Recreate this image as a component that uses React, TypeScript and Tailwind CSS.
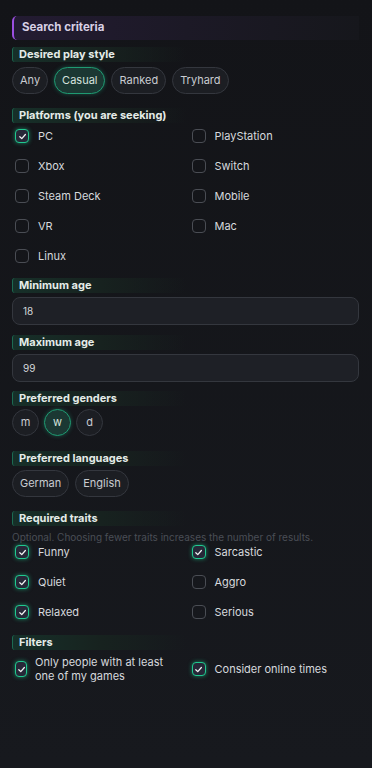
const font = { fontFamily: 'Inter, "Noto Sans", sans-serif' };

function Label({ children }: { children: React.ReactNode }) {
  return (
    <div className="flex h-[15px] w-[175px] items-center rounded-l-[3px] border-l border-[#1c6b52] bg-gradient-to-r from-[#163029] via-[#17221f] to-transparent pl-[6px] text-[11px] font-bold leading-none text-[#e4ece8]">
      {children}
    </div>
  );
}

function Pill({ text, active }: { text: string; active?: boolean }) {
  return (
    <div
      className={`flex h-[27px] items-center rounded-full border px-[7px] text-[11px] ${
        active
          ? 'border-[#1f9a72] bg-[#1b3833] text-[#d6e2de] shadow-[0_0_4px_rgba(31,190,140,0.35)]'
          : 'border-[#34373e] bg-[#1c1e23] text-[#c9ccd1]'
      }`}
    >
      {text}
    </div>
  );
}

function Circle({ text, active }: { text: string; active?: boolean }) {
  return (
    <div
      className={`flex h-[27px] w-[27px] items-center justify-center rounded-full border text-[11px] ${
        active
          ? 'border-[#1f9a72] bg-[#1b3833] text-[#d6e2de] shadow-[0_0_4px_rgba(31,190,140,0.35)]'
          : 'border-[#34373e] bg-[#1c1e23] text-[#c9ccd1]'
      }`}
    >
      {text}
    </div>
  );
}

function Check({ label, checked, narrow }: { label: React.ReactNode; checked?: boolean; narrow?: boolean }) {
  return (
    <div className={`flex h-[24px] items-center pl-[3px] ${narrow ? 'gap-[8px]' : 'gap-[9px]'}`}>
      <div
        className={`flex shrink-0 items-center justify-center rounded-[4px] border ${
          narrow ? 'h-[16px] w-[12px]' : 'h-[14px] w-[14px]'
        } ${
          checked
            ? 'border-[#20c98f] bg-[#272838] shadow-[0_0_4px_rgba(32,201,143,0.6)]'
            : 'border-[#4a4d54] bg-transparent'
        }`}
      >
        {checked && (
          <svg width="9" height="9" viewBox="0 0 10 10" fill="none">
            <path d="M2 5.3 L4.2 7.4 L8.2 2.8" stroke="#f2f4f5" strokeWidth="1.4" strokeLinecap="round" strokeLinejoin="round" />
          </svg>
        )}
      </div>
      <span className="text-[11px] leading-[14px] text-[#d6d9dd]">{label}</span>
    </div>
  );
}

function Input({ value }: { value: string }) {
  return (
    <div className="flex h-[28px] items-center rounded-[8px] border border-[#34373e] bg-[#1e2026] px-[10px] text-[10px] text-[#d4d7db]">
      {value}
    </div>
  );
}

export default function App() {
  return (
    <div style={font} className="min-h-[768px] w-[372px] bg-gradient-to-b from-[#131418] to-[#17191e] pl-3 pr-[13px] pt-[16px]">
      <div className="flex h-[24px] items-center rounded-l-[5px] border-l-2 border-[#9b4fe0] bg-gradient-to-r from-[#231b32] via-[#1c1926] to-[#16171c] pl-[8px] text-[11.5px] font-bold text-[#d8d0e6]">
        Search criteria
      </div>

      <div className="mt-[7px]">
        <Label>Desired play style</Label>
        <div className="mt-[5px] flex gap-[6px]">
          <Pill text="Any" />
          <Pill text="Casual" active />
          <Pill text="Ranked" />
          <Pill text="Tryhard" />
        </div>
      </div>

      <div className="mt-[14px]">
        <Label>Platforms (you are seeking)</Label>
        <div className="mt-[1px] grid grid-cols-2 gap-y-[6px]">
          <Check label="PC" checked />
          <div className="pl-[3px]"><Check label="PlayStation" /></div>
          <Check label="Xbox" />
          <div className="pl-[3px]"><Check label="Switch" /></div>
          <Check label="Steam Deck" />
          <div className="pl-[3px]"><Check label="Mobile" /></div>
          <Check label="VR" />
          <div className="pl-[3px]"><Check label="Mac" /></div>
          <Check label="Linux" />
        </div>
      </div>

      <div className="mt-[10px]">
        <Label>Minimum age</Label>
        <div className="mt-[4px]"><Input value="18" /></div>
      </div>

      <div className="mt-[10px]">
        <Label>Maximum age</Label>
        <div className="mt-[4px]"><Input value="99" /></div>
      </div>

      <div className="mt-[9px]">
        <Label>Preferred genders</Label>
        <div className="mt-[3px] flex gap-[5px]">
          <Circle text="m" />
          <Circle text="w" active />
          <Circle text="d" />
        </div>
      </div>

      <div className="mt-[15px]">
        <Label>Preferred languages</Label>
        <div className="mt-[4px] flex gap-[6px]">
          <Pill text="German" />
          <Pill text="English" />
        </div>
      </div>

      <div className="mt-[14px]">
        <Label>Required traits</Label>
        <div className="mt-[4px] text-[10px] leading-[14px] text-[#4a4e56]">
          Optional. Choosing fewer traits increases the number of results.
        </div>
        <div className="-mt-[4px] grid grid-cols-2 gap-y-[6px]">
          <Check label="Funny" checked />
          <div className="pl-[3px]"><Check label="Sarcastic" checked /></div>
          <Check label="Quiet" checked />
          <div className="pl-[3px]"><Check label="Aggro" /></div>
          <Check label="Relaxed" checked />
          <div className="pl-[3px]"><Check label="Serious" /></div>
        </div>
      </div>

      <div className="mt-[11px]">
        <Label>Filters</Label>
        <div className="mt-[7px] grid grid-cols-2">
          <Check
            checked
            narrow
            label={
              <>
                Only people with at least
                <br />
                one of my games
              </>
            }
          />
          <div className="pl-[3px]"><Check label="Consider online times" checked /></div>
        </div>
      </div>
    </div>
  );
}
